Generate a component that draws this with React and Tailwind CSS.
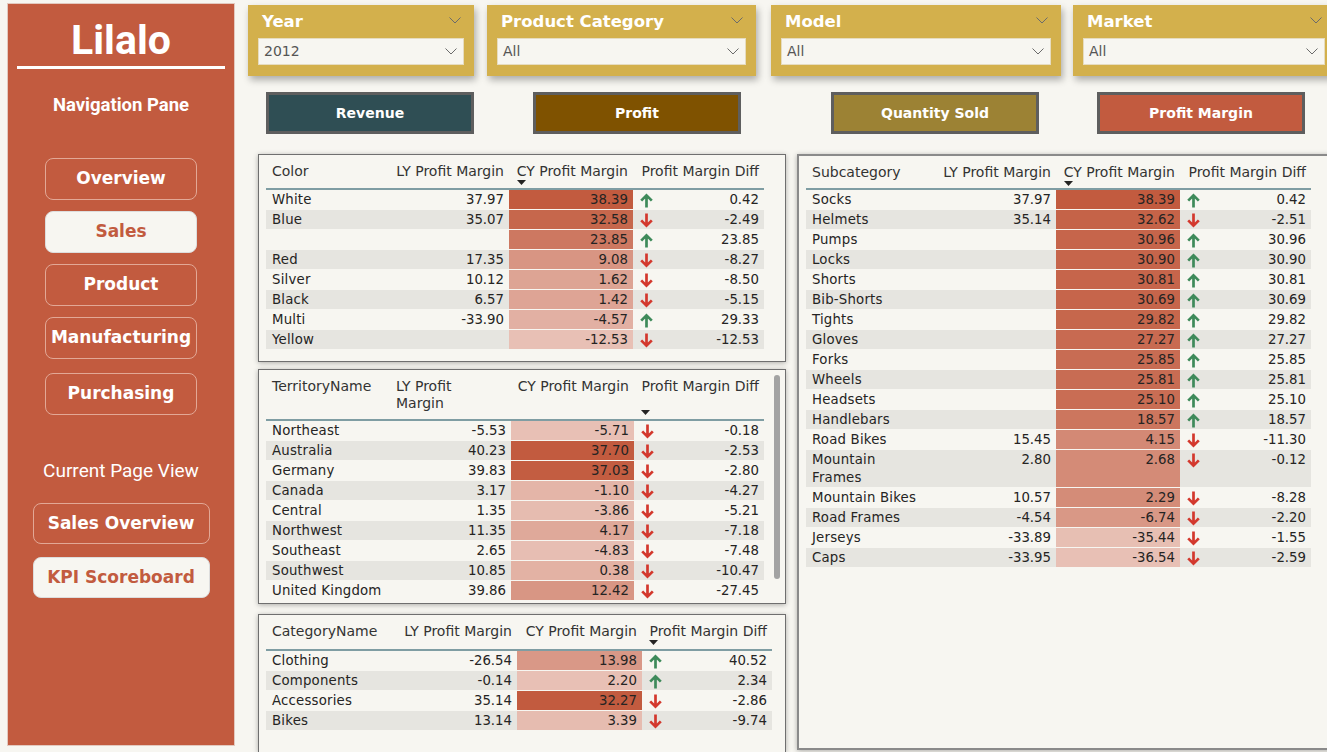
import React from 'react';

const DARK = [194, 91, 63];
const LIGHT = [232, 192, 181];

function heat(v, min, max) {
  const t = (v - min) / (max - min);
  const c = LIGHT.map((l, i) => Math.round(l + (DARK[i] - l) * t));
  return `rgb(${c.join(',')})`;
}

const Chevron = ({ className = '' }) => (
  <svg width="12" height="7" viewBox="0 0 12 7" className={className}>
    <polyline points="0.5,0.5 6,6 11.5,0.5" fill="none" stroke="#6b6b6b" strokeWidth="1" />
  </svg>
);

const Arrow = ({ up }) =>
  up ? (
    <svg width="13" height="15" viewBox="0 0 13 15">
      <path d="M6.5 14.5V2.5M1.2 7.6L6.5 2.3l5.3 5.3" stroke="#3e8a5a" strokeWidth="2.7" fill="none" />
    </svg>
  ) : (
    <svg width="13" height="15" viewBox="0 0 13 15">
      <path d="M6.5 0.5V12.5M1.2 7.4l5.3 5.3 5.3-5.3" stroke="#d3382d" strokeWidth="2.7" fill="none" />
    </svg>
  );

const SortMark = () => (
  <svg width="9" height="5" viewBox="0 0 9 5" className="shrink-0">
    <polygon points="0,0 9,0 4.5,5" fill="#252423" />
  </svg>
);

const Slicer = ({ title, value, w, ml }) => (
  <div className={`${w} ${ml} h-[71px] bg-[#d3b04c] shadow-[2px_4px_7px_rgba(0,0,0,0.3)] px-[10px] flex flex-col shrink-0`}>
    <div className="flex items-center justify-between h-[33px] pl-[4px] pr-[3px] pt-[1px]">
      <span className="text-white font-bold text-[16.5px]">{title}</span>
      <Chevron className="-mt-[4px]" />
    </div>
    <div className="h-[27px] bg-[#f7f6f1] border border-[#e6dcc0] flex items-center justify-between pl-[5px] pr-[6px]">
      <span className="text-[14px] text-[#555]">{value}</span>
      <Chevron />
    </div>
  </div>
);

const Measure = ({ label, bg, ml }) => (
  <div className={`${ml} w-[208px] h-[42px] ${bg} border-[3px] border-[#5e5e5e] flex items-center justify-center shrink-0`}>
    <span className="text-white font-bold text-[14px]">{label}</span>
  </div>
);

const NavButton = ({ label, active, w = 'w-[152px]', h = 'h-[42px]' }) => (
  <div
    className={`${w} ${h} rounded-[8px] border flex items-center justify-center font-bold text-[17px] ${
      active ? 'bg-[#f7f6f1] border-[#ddd] text-[#c25b3f]' : 'border-[#e2a896] text-white'
    }`}
    style={{ fontFamily: '"DejaVu Sans", Verdana, sans-serif' }}
  >
    {label}
  </div>
);

function DataTable({ widths, headers, headerH, sortCol, rows }) {
  const cy = rows.map((r) => r[2]);
  const min = Math.min(...cy);
  const max = Math.max(...cy);
  return (
    <div className="mx-[7px] w-max">
      <div className={`flex ${headerH} border-b-2 border-[#7f9da3] text-[14px]`}>
        {headers.map((h, i) => (
          <div
            key={i}
            className={`${widths[i]} shrink-0 flex h-full ${i === 0 ? 'justify-start pl-[6px]' : 'justify-end pr-[5px]'} ${
              h.left ? '!justify-start !pl-[3px]' : ''
            }`}
          >
            <div className="inline-flex flex-col justify-between items-start h-full pt-[8px] pb-[4px]">
              <span className="leading-[17px] text-[#333] whitespace-pre-line">{h.label}</span>
              {sortCol === i ? <SortMark /> : null}
            </div>
          </div>
        ))}
      </div>
      {rows.map((r, idx) => (
        <div key={idx} className={`flex border-b border-[#f7f6f1] ${idx % 2 ? 'bg-[#e6e5e0]' : 'bg-[#f7f6f1]'}`}>
          <div className={`${widths[0]} shrink-0 pl-[6px] pt-[1px] leading-[18px] whitespace-pre-line tracking-[0.2px]`}>{r[0]}</div>
          <div className={`${widths[1]} shrink-0 pr-[5px] pt-[1px] leading-[18px] text-right`}>
            {r[1] === null ? '' : r[1].toFixed(2)}
          </div>
          <div
            className={`${widths[2]} shrink-0 pr-[5px] pt-[1px] leading-[18px] text-right`}
            style={{ backgroundColor: heat(r[2], min, max) }}
          >
            {r[2].toFixed(2)}
          </div>
          <div className={`${widths[3]} shrink-0 flex items-start justify-between pl-[7px] pr-[5px] pt-[1px] leading-[18px]`}>
            <span className="pt-[2px]">
              <Arrow up={r[3] >= 0} />
            </span>
            <span>{r[3].toFixed(2)}</span>
          </div>
        </div>
      ))}
    </div>
  );
}

const colorRows = [
  ['White', 37.97, 38.39, 0.42],
  ['Blue', 35.07, 32.58, -2.49],
  ['', null, 23.85, 23.85],
  ['Red', 17.35, 9.08, -8.27],
  ['Silver', 10.12, 1.62, -8.5],
  ['Black', 6.57, 1.42, -5.15],
  ['Multi', -33.9, -4.57, 29.33],
  ['Yellow', null, -12.53, -12.53],
];

const territoryRows = [
  ['Northeast', -5.53, -5.71, -0.18],
  ['Australia', 40.23, 37.7, -2.53],
  ['Germany', 39.83, 37.03, -2.8],
  ['Canada', 3.17, -1.1, -4.27],
  ['Central', 1.35, -3.86, -5.21],
  ['Northwest', 11.35, 4.17, -7.18],
  ['Southeast', 2.65, -4.83, -7.48],
  ['Southwest', 10.85, 0.38, -10.47],
  ['United Kingdom', 39.86, 12.42, -27.45],
];

const categoryRows = [
  ['Clothing', -26.54, 13.98, 40.52],
  ['Components', -0.14, 2.2, 2.34],
  ['Accessories', 35.14, 32.27, -2.86],
  ['Bikes', 13.14, 3.39, -9.74],
];

const subRows = [
  ['Socks', 37.97, 38.39, 0.42],
  ['Helmets', 35.14, 32.62, -2.51],
  ['Pumps', null, 30.96, 30.96],
  ['Locks', null, 30.9, 30.9],
  ['Shorts', null, 30.81, 30.81],
  ['Bib-Shorts', null, 30.69, 30.69],
  ['Tights', null, 29.82, 29.82],
  ['Gloves', null, 27.27, 27.27],
  ['Forks', null, 25.85, 25.85],
  ['Wheels', null, 25.81, 25.81],
  ['Headsets', null, 25.1, 25.1],
  ['Handlebars', null, 18.57, 18.57],
  ['Road Bikes', 15.45, 4.15, -11.3],
  ['Mountain\nFrames', 2.8, 2.68, -0.12],
  ['Mountain Bikes', 10.57, 2.29, -8.28],
  ['Road Frames', -4.54, -6.74, -2.2],
  ['Jerseys', -33.89, -35.44, -1.55],
  ['Caps', -33.95, -36.54, -2.59],
];

const stdHeaders = (first) => [
  { label: first },
  { label: 'LY Profit Margin' },
  { label: 'CY Profit Margin' },
  { label: 'Profit Margin Diff' },
];

export default function App() {
  return (
    <div
      className="w-[1327px] h-[752px] overflow-hidden bg-[#f7f6f1] flex text-[#252423] text-[13.3px]"
      style={{ fontFamily: '"DejaVu Sans", Verdana, sans-serif' }}
    >
      {/* sidebar */}
      <div className="pl-[7px] pt-[3px] shrink-0">
        <div className="w-[228px] h-[743px] bg-[#c25b3f] border border-[#e3c9bf] flex flex-col items-center">
          <div className="text-white font-bold text-[41px] leading-[48px] mt-[12px]" style={{ fontFamily: 'Roboto, sans-serif' }}>
            Lilalo
          </div>
          <div className="w-[208px] h-[3px] bg-white mt-[2px]" />
          <div className="text-white font-bold text-[18.5px] mt-[23px]" style={{ fontFamily: 'Roboto, sans-serif' }}>
            Navigation Pane
          </div>
          <div className="flex flex-col items-center gap-[11px] mt-[38px]">
            <NavButton label="Overview" />
            <NavButton label="Sales" active />
            <NavButton label="Product" />
            <NavButton label="Manufacturing" />
            <div className="mt-[3px]">
              <NavButton label="Purchasing" />
            </div>
          </div>
          <div className="text-white text-[19px] mt-[42px]" style={{ fontFamily: 'Roboto, sans-serif' }}>
            Current Page View
          </div>
          <div className="flex flex-col gap-[13px] mt-[18px]">
            <NavButton label="Sales Overview" w="w-[177px]" h="h-[41px]" />
            <NavButton label="KPI Scoreboard" active w="w-[177px]" h="h-[41px]" />
          </div>
        </div>
      </div>

      {/* main */}
      <div className="ml-[13px] flex flex-col min-w-0 flex-1">
        <div className="flex mt-[5px]">
          <Slicer title="Year" value="2012" w="w-[226px]" ml="" />
          <Slicer title="Product Category" value="All" w="w-[269px]" ml="ml-[13px]" />
          <Slicer title="Model" value="All" w="w-[290px]" ml="ml-[15px]" />
          <Slicer title="Market" value="All" w="w-[262px]" ml="ml-[12px]" />
        </div>

        <div className="flex mt-[16px]">
          <Measure label="Revenue" bg="bg-[#2f4e54]" ml="ml-[18px]" />
          <Measure label="Profit" bg="bg-[#7f5200]" ml="ml-[59px]" />
          <Measure label="Quantity Sold" bg="bg-[#9c8234]" ml="ml-[90px]" />
          <Measure label="Profit Margin" bg="bg-[#c25b3f]" ml="ml-[58px]" />
        </div>

        <div className="flex mt-[20px] flex-1 min-h-0">
          <div className="ml-[10px] w-[528px] shrink-0 flex flex-col">
            <div className="h-[208px] border border-[#6f6f6f] shadow-[0_1px_5px_rgba(0,0,0,0.3)] bg-[#f7f6f1]">
              <DataTable
                widths={['w-[117px]', 'w-[126px]', 'w-[124px]', 'w-[131px]']}
                headers={stdHeaders('Color')}
                headerH="h-[35px]"
                sortCol={2}
                rows={colorRows}
              />
            </div>
            <div className="mt-[7px] h-[235px] border border-[#6f6f6f] shadow-[0_1px_5px_rgba(0,0,0,0.3)] bg-[#f7f6f1] flex overflow-hidden">
              <DataTable
                widths={['w-[127px]', 'w-[118px]', 'w-[123px]', 'w-[130px]']}
                headers={[
                  { label: 'TerritoryName' },
                  { label: 'LY Profit\nMargin', left: true },
                  { label: 'CY Profit Margin' },
                  { label: 'Profit Margin Diff' },
                ]}
                headerH="h-[51px]"
                sortCol={3}
                rows={territoryRows}
              />
              <div className="ml-[3px] mt-[5px] w-[6px] h-[204px] rounded-[3px] bg-[#a3a3a3]" />
            </div>
            <div className="mt-[10px] flex-1 border border-[#6f6f6f] border-b-0 shadow-[0_1px_5px_rgba(0,0,0,0.3)] bg-[#f7f6f1]">
              <DataTable
                widths={['w-[131px]', 'w-[120px]', 'w-[125px]', 'w-[130px]']}
                headers={stdHeaders('CategoryName')}
                headerH="h-[36px]"
                sortCol={3}
                rows={categoryRows}
              />
            </div>
          </div>

          <div className="ml-[11px] w-[545px] shrink-0 h-[596px] border-2 border-[#8a8a8a] shadow-[0_1px_5px_rgba(0,0,0,0.3)] bg-[#f7f6f1]">
            <DataTable
              widths={['w-[130px]', 'w-[120px]', 'w-[124px]', 'w-[131px]']}
              headers={stdHeaders('Subcategory')}
              headerH="h-[34px]"
              sortCol={2}
              rows={subRows}
            />
          </div>
        </div>
      </div>
    </div>
  );
}
